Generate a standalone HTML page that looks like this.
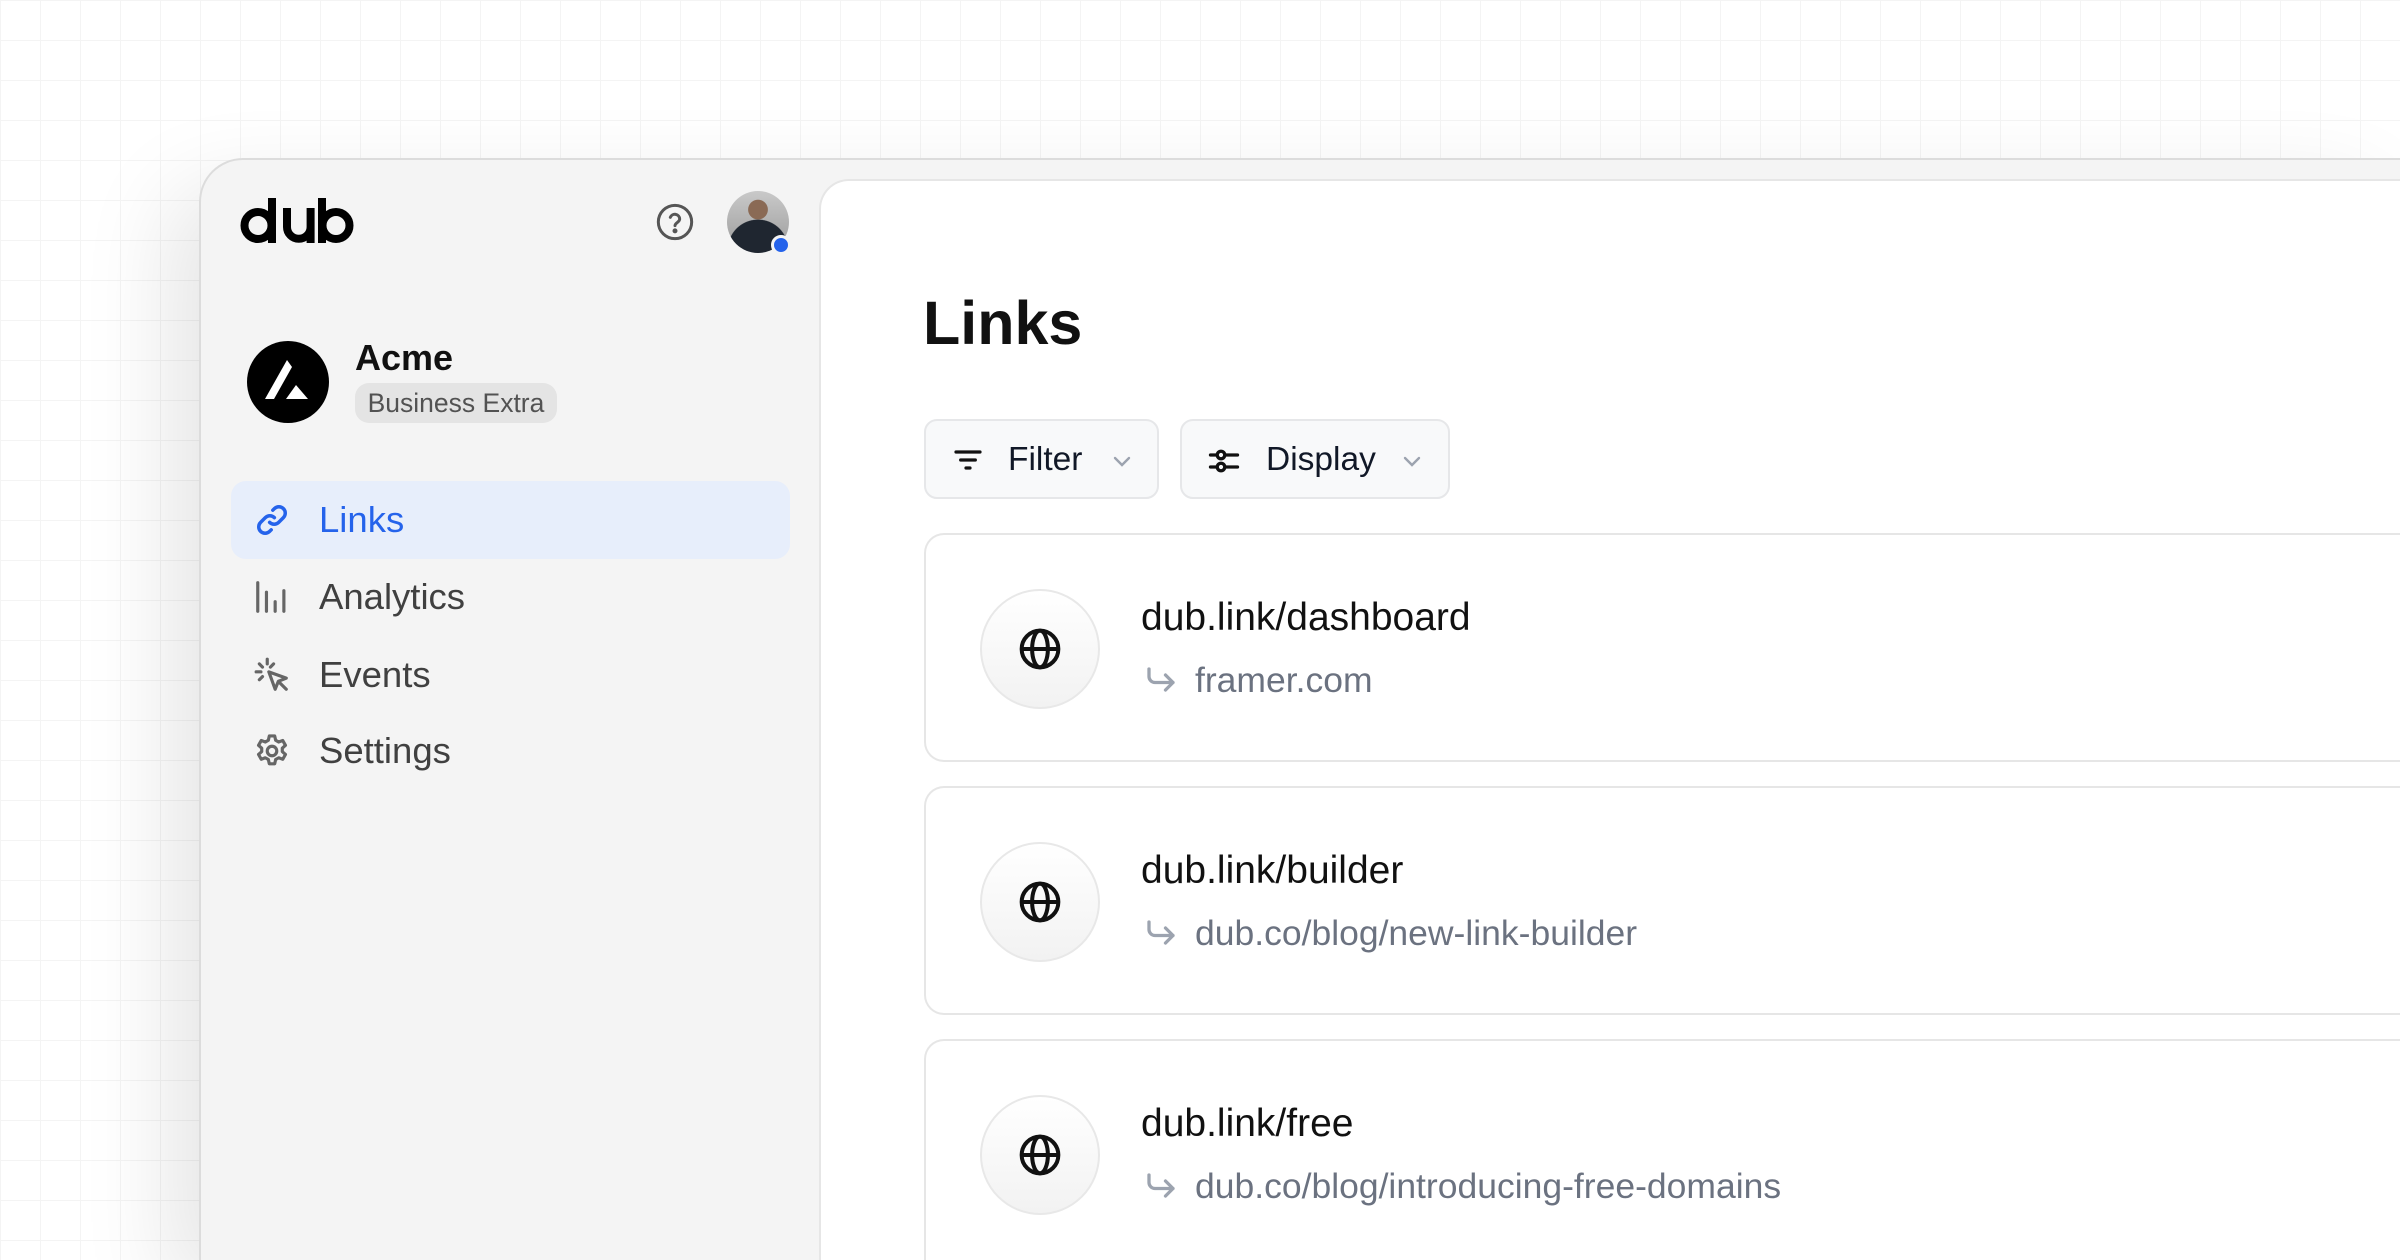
<!DOCTYPE html>
<html><head><meta charset="utf-8">
<style>
*{margin:0;padding:0;box-sizing:border-box}
html,body{width:2400px;height:1260px;overflow:hidden;background:#fff;font-family:"Liberation Sans",Arial,sans-serif}
#wrap{position:fixed;left:0;top:0;width:2400px;height:1260px;overflow:hidden}
.grid{position:absolute;inset:0;background-image:linear-gradient(#f4f4f4 1px,transparent 1px),linear-gradient(90deg,#f4f4f4 1px,transparent 1px);background-size:40px 40px;background-position:0 40px,40px 0}
.frame{position:absolute;left:199px;top:158px;width:2201px;height:1102px;background:#f4f4f4;border:2px solid #dcdcdc;border-right:none;border-bottom:none;border-radius:44px 0 0 0;box-shadow:-30px 30px 90px rgba(0,0,0,.10)}
.main{position:absolute;left:819px;top:179px;width:1581px;height:1081px;background:#fff;border:2px solid #e6e6e6;border-right:none;border-bottom:none;border-radius:30px 0 0 0}
.abs{position:absolute}
.nav{position:absolute;left:231px;width:559px;height:78px;border-radius:15px;display:flex;align-items:center;font-size:36.5px;color:#404040}
.nav svg{position:absolute;left:22px}
.nav span{position:absolute;left:88px}
.btn{position:absolute;top:419px;height:80px;background:#f8f9fa;border:2px solid #e6e7e9;border-radius:13px;font-size:33.5px;color:#111827}
.card{position:absolute;left:924px;width:1476px;height:229px;border:2px solid #e6e6e6;border-right:none;border-radius:20px 0 0 20px;background:#fff}
.gl{position:absolute;left:54px;top:54px;width:120px;height:120px;border-radius:50%;border:2px solid #e8e8e8;background:linear-gradient(#fff,#f2f2f2);display:flex;align-items:center;justify-content:center}
.t1{position:absolute;left:215px;top:61px;font-size:39px;color:#111}
.t2{position:absolute;left:269px;top:125px;font-size:35.5px;color:#6b7280}
.ar{position:absolute;left:217px;top:128px}
</style></head><body><div id="wrap">
<div class="grid"></div>
<div class="frame"></div>
<svg class="abs" style="left:0;top:0" width="400" height="260" fill="none" stroke="#000" stroke-width="8">
<circle cx="258" cy="225.5" r="13.5"/><line x1="272" y1="198" x2="272" y2="243"/>
<path d="M287 208V227a11.8 11.8 0 0 0 23.6 0V208M310.6 226V243"/>
<circle cx="336" cy="225.5" r="13.5"/><line x1="322" y1="198" x2="322" y2="243"/>
</svg>
<svg class="abs" style="left:655px;top:202px" width="40" height="40" viewBox="0 0 24 24" fill="none" stroke="#555" stroke-width="1.8" stroke-linecap="round"><circle cx="12" cy="12" r="10"/><path d="M9.2 9.2a2.9 2.9 0 0 1 5.6 1c0 1.9-2.8 2.3-2.8 4"/><circle cx="12" cy="17.3" r=".6" fill="#555"/></svg>
<div class="abs" style="left:727px;top:191px;width:62px;height:62px;border-radius:50%;background:radial-gradient(circle at 50% 30%,#8a6a55 0 18%,transparent 19%),radial-gradient(circle at 50% 95%,#1f2630 0 45%,transparent 46%),linear-gradient(#c9c9c9,#9a9a9a)"></div>
<div class="abs" style="left:771px;top:235px;width:20px;height:20px;border-radius:50%;background:#2563eb;border:3px solid #f4f4f4"></div>
<svg class="abs" style="left:247px;top:341px" width="82" height="82" viewBox="0 0 82 82"><circle cx="41" cy="41" r="41" fill="#000"/><path d="M18 58L40 19 45 26 27 58Z" fill="#fff"/><path d="M39 58L49 44 61 58Z" fill="#fff"/></svg>
<div class="abs" style="left:355px;top:337px;font-size:36px;font-weight:bold;color:#111">Acme</div>
<div class="abs" style="left:355px;top:383px;width:202px;height:40px;border-radius:14px;background:#e4e4e4;color:#525252;font-size:26.5px;line-height:40px;text-align:center">Business Extra</div>
<div class="nav" style="top:481px;background:#e7eefb;color:#2563eb"><svg width="38" height="38" viewBox="0 0 24 24" fill="none" stroke="#2563eb" stroke-width="2.2" stroke-linecap="round"><path d="M10.5 13.5a4 4 0 0 0 5.7 0l3-3a4 4 0 0 0-5.7-5.7l-1 1"/><path d="M13.5 10.5a4 4 0 0 0-5.7 0l-3 3a4 4 0 0 0 5.7 5.7l1-1"/></svg><span>Links</span></div>
<div class="nav" style="top:558px"><svg width="38" height="38" viewBox="0 0 24 24" fill="none" stroke="#666" stroke-width="2" stroke-linecap="round"><path d="M3 3v18M8.5 9v12M14 15v6M19.5 8v13"/></svg><span>Analytics</span></div>
<div class="nav" style="top:636px"><svg width="38" height="38" viewBox="0 0 24 24" fill="none" stroke="#666" stroke-width="2" stroke-linecap="round" stroke-linejoin="round"><path d="M9 2v3M4 5l2 2M2 10h3M4 15l2-2M13 5l-2 2M10 10l11 4-5 2-2 5z M16 16l5 5"/></svg><span>Events</span></div>
<div class="nav" style="top:712px"><svg width="38" height="38" viewBox="0 0 24 24" fill="none" stroke="#666" stroke-width="2" stroke-linejoin="round"><path d="M10.3 2.5h3.4l.6 2.7 1.9 1.1 2.6-.9 1.7 3-2 1.8v2.2l2 1.8-1.7 3-2.6-.9-1.9 1.1-.6 2.7h-3.4l-.6-2.7-1.9-1.1-2.6.9-1.7-3 2-1.8v-2.2l-2-1.8 1.7-3 2.6.9 1.9-1.1z"/><circle cx="12" cy="12" r="3"/></svg><span>Settings</span></div>
<div class="main"></div>
<div class="abs" style="left:923px;top:288px;font-size:61px;font-weight:bold;color:#111">Links</div>
<div class="btn" style="left:924px;width:235px"><svg class="abs" style="left:26px;top:23px" width="32" height="32" viewBox="0 0 24 24" fill="none" stroke="#111" stroke-width="2.4" stroke-linecap="round"><path d="M3 6h18M6.5 12h11M10.5 18h3"/></svg><span class="abs" style="left:82px;top:20px">Filter</span><svg class="abs" style="left:184px;top:29px" width="24" height="24" viewBox="0 0 24 24" fill="none" stroke="#9ca3af" stroke-width="2.4" stroke-linecap="round"><path d="M5 8l7 7 7-7"/></svg></div>
<div class="btn" style="left:1180px;width:270px"><svg class="abs" style="left:24px;top:22px" width="36" height="36" viewBox="0 0 24 24" fill="none" stroke="#111" stroke-width="2.2" stroke-linecap="round"><path d="M3 8h4M13 8h8M3 16h4M13 16h8"/><circle cx="10" cy="8" r="2.5"/><circle cx="10" cy="16" r="2.5"/></svg><span class="abs" style="left:84px;top:20px">Display</span><svg class="abs" style="left:218px;top:29px" width="24" height="24" viewBox="0 0 24 24" fill="none" stroke="#9ca3af" stroke-width="2.4" stroke-linecap="round"><path d="M5 8l7 7 7-7"/></svg></div>
<div class="card" style="top:533px"><div class="gl"><svg width="44" height="44" viewBox="0 0 24 24" fill="none" stroke="#111" stroke-width="2.2"><circle cx="12" cy="12" r="10"/><ellipse cx="12" cy="12" rx="4.3" ry="10"/><path d="M2 12h20"/></svg></div><div class="t1">dub.link/dashboard</div><svg class="ar" width="36" height="36" viewBox="0 0 24 24" fill="none" stroke="#9ca3af" stroke-width="2.2" stroke-linecap="round" stroke-linejoin="round"><path d="M4 4v5a4 4 0 0 0 4 4h12M15 8l5 5-5 5"/></svg><div class="t2">framer.com</div></div>
<div class="card" style="top:786px"><div class="gl"><svg width="44" height="44" viewBox="0 0 24 24" fill="none" stroke="#111" stroke-width="2.2"><circle cx="12" cy="12" r="10"/><ellipse cx="12" cy="12" rx="4.3" ry="10"/><path d="M2 12h20"/></svg></div><div class="t1">dub.link/builder</div><svg class="ar" width="36" height="36" viewBox="0 0 24 24" fill="none" stroke="#9ca3af" stroke-width="2.2" stroke-linecap="round" stroke-linejoin="round"><path d="M4 4v5a4 4 0 0 0 4 4h12M15 8l5 5-5 5"/></svg><div class="t2">dub.co/blog/new-link-builder</div></div>
<div class="card" style="top:1039px;height:221px;border-bottom:none;border-radius:20px 0 0 0"><div class="gl"><svg width="44" height="44" viewBox="0 0 24 24" fill="none" stroke="#111" stroke-width="2.2"><circle cx="12" cy="12" r="10"/><ellipse cx="12" cy="12" rx="4.3" ry="10"/><path d="M2 12h20"/></svg></div><div class="t1">dub.link/free</div><svg class="ar" width="36" height="36" viewBox="0 0 24 24" fill="none" stroke="#9ca3af" stroke-width="2.2" stroke-linecap="round" stroke-linejoin="round"><path d="M4 4v5a4 4 0 0 0 4 4h12M15 8l5 5-5 5"/></svg><div class="t2">dub.co/blog/introducing-free-domains</div></div>
</div></body></html>
